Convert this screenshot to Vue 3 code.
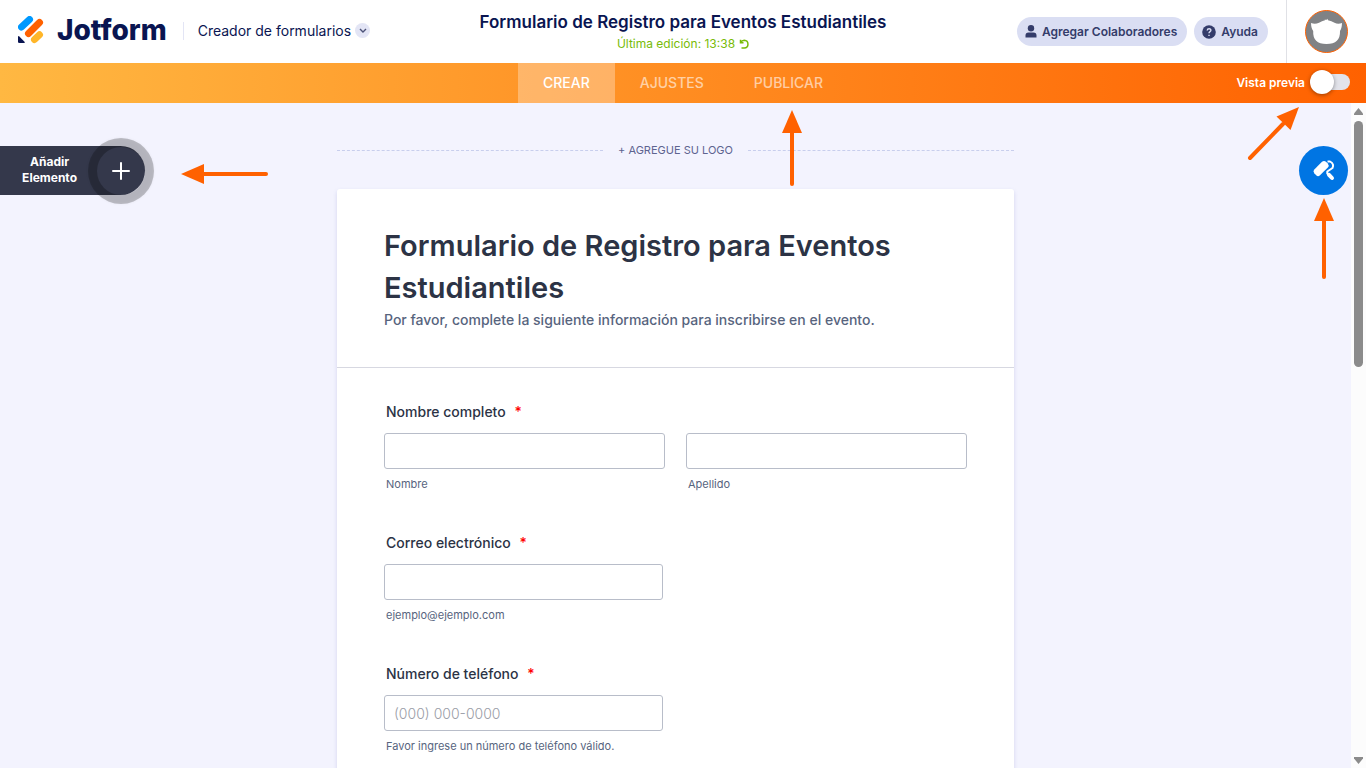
<template>
  <div class="builder">
    <header class="topbar">
      <div class="brand">
        <a class="logo" href="#" aria-label="Jotform">
          <svg class="logo-mark" width="26" height="28" viewBox="0 0 26 28">
            <g fill="none" stroke-width="7" stroke-linecap="round">
              <path d="M3.500 11 L11.500 3.500" stroke="#0099ff" />
              <path d="M10.500 17.500 L21.500 6.500" stroke="#ff6100" />
              <path d="M16.500 23.500 L21.500 18.800" stroke="#ffb629" />
            </g>
            <path d="M0 21 Q0 19.500 1.300 20.500 L6.500 25.800 Q7.500 27 6 27 H1.500 Q0 27 0 26 Z" fill="#0a1551" />
          </svg>
          <span class="logo-name">Jotform</span>
        </a>
        <button class="product" type="button">
          Creador de formularios
          <span class="product-caret">
            <svg width="8" height="5" viewBox="0 0 8 5"><path d="M1 1 L4 4 L7 1" /></svg>
          </span>
        </button>
      </div>

      <div class="heading">
        <h1 class="heading-title">{{ title }}</h1>
        <p class="heading-saved">
          Última edición: 13:38
          <svg width="10" height="10" viewBox="0 0 10 10"><path d="M1.500 0.800 V3.700 H4.500 M1.700 3.500 C2.500 2 3.700 1.300 5.200 1.300 C10.200 1.600 10.200 8.700 5.200 9 H2.500" /></svg>
        </p>
      </div>

      <div class="account">
        <button class="pill" type="button">
          <svg width="12" height="13" viewBox="0 0 12 13">
            <circle cx="6" cy="3.300" r="3.200" />
            <path d="M0.500 12.500 V10.500 Q0.500 7.500 3.500 7.500 H8.500 Q11.500 7.500 11.500 10.500 V12.500 Z" />
          </svg>
          Agregar Colaboradores
        </button>
        <button class="pill" type="button">
          <svg width="14" height="14" viewBox="0 0 14 14">
            <circle cx="7" cy="7" r="6.800" />
            <path d="M5.200 5.500 C5.400 3.200 8.900 3.300 8.900 5.300 C8.900 6.700 7 6.600 7 8.200 M7 9.700 V10.900" fill="none" stroke="#dadef3" stroke-width="1.400" />
          </svg>
          Ayuda
        </button>
        <button class="profile" type="button" aria-label="Mi cuenta">
          <svg width="43" height="43" viewBox="0 0 43 43">
            <circle cx="21.500" cy="21.500" r="21" fill="#808285" stroke="#ff6100" />
            <path d="M6 13 Q10 14.500 14 12.800 Q17 10.800 20 10.300 L19.700 9.500 L21.300 10 L22.300 8.800 L23 10.200 Q26.500 10.800 29.500 12.800 Q33 14.500 37 13 Q36.800 18.500 35 21 Q35.500 34 21.500 34 Q7.500 34 8.200 21 Q6.200 18.500 6 13 Z" fill="#ffffff" />
          </svg>
        </button>
      </div>
    </header>

    <nav class="tabs">
      <div class="tab-list">
        <button
          v-for="tab in tabs"
          :key="tab"
          type="button"
          class="tab"
          :class="{ active: tab === activeTab }"
          @click="activeTab = tab"
        >
          {{ tab }}
        </button>
      </div>
      <label class="preview">
        Vista previa
        <input v-model="preview" type="checkbox" class="switch" />
      </label>
    </nav>

    <div class="body">
      <main class="workspace">
        <div class="side">
          <button class="add-element" type="button">
            <span class="add-text">Añadir<br />Elemento</span>
            <span class="add-circle">
              <svg width="18" height="18" viewBox="0 0 18 18"><path d="M9 1 V17 M1 9 H17" /></svg>
            </span>
          </button>
        </div>

        <div class="stage">
          <button class="add-logo" type="button"><span>+ AGREGUE SU LOGO</span></button>

          <form class="form-card" @submit.prevent>
            <div class="form-head">
              <h2 class="form-title">{{ title }}</h2>
              <p class="form-subtitle">Por favor, complete la siguiente información para inscribirse en el evento.</p>
            </div>
            <div class="questions">
              <fieldset v-for="q in questions" :key="q.label" class="question">
                <legend class="question-label">{{ q.label }} <span class="required">*</span></legend>
                <div class="inputs" :class="{ single: q.inputs.length === 1 }">
                  <div v-for="input in q.inputs" :key="input.id" class="field">
                    <input :id="input.id" :type="input.type" :placeholder="input.placeholder" class="text-input" />
                    <label :for="input.id" class="sublabel">{{ input.sublabel }}</label>
                  </div>
                </div>
              </fieldset>
            </div>
          </form>
        </div>

        <div class="side side-right">
          <button class="designer" type="button" aria-label="Diseñador de formularios">
            <svg width="24" height="24" viewBox="0 0 24 24">
              <path d="M10 2.800 Q12 1 14 2.800 L15.800 4.500 Q17.500 6.500 15.800 8.500 L8 16.300 Q6 18 4.200 16.300 L2.300 14.300 Q0.600 12.300 2.300 10.500 Z" fill="#ffffff" />
              <path d="M15.500 2.500 H18 Q22.500 5 20.500 9 L15.300 12.500 V14.500 L17 16" fill="none" stroke="#ffffff" stroke-width="2" stroke-linejoin="round" />
              <path d="M17 15.800 L20 19" stroke="#ffffff" stroke-width="4" stroke-linecap="round" />
            </svg>
          </button>
        </div>

        <!-- Flechas de la guía -->
        <svg class="arrow arrow-add" width="88" height="22" viewBox="0 0 88 22">
          <path d="M23 11 H85" />
          <polygon points="0,11 23,1 23,21" />
        </svg>
        <svg class="arrow arrow-publish" width="22" height="77" viewBox="0 0 22 77">
          <path d="M11 23 V74" />
          <polygon points="11,0 21,23 1,23" />
        </svg>
        <svg class="arrow arrow-preview" width="54" height="54" viewBox="0 0 54 54">
          <path d="M37 17 L4 51" />
          <polygon points="53,0 44.500,23 30.500,9.500" />
        </svg>
        <svg class="arrow arrow-designer" width="22" height="82" viewBox="0 0 22 82">
          <path d="M11 23 V79" />
          <polygon points="11,0 21,23 1,23" />
        </svg>
      </main>

      <div class="scrollbar" aria-hidden="true">
        <svg width="9" height="7" viewBox="0 0 9 7"><path d="M4.500 0 L9 5.500 V7 H0 V5.500 Z" /></svg>
        <div class="scroll-track"><div class="scroll-thumb"></div></div>
        <svg width="9" height="7" viewBox="0 0 9 7"><path d="M4.500 7 L9 1.500 V0 H0 V1.500 Z" /></svg>
      </div>
    </div>
  </div>
</template>

<script setup>
import { ref } from 'vue';

const title = 'Formulario de Registro para Eventos Estudiantiles';
const tabs = ['CREAR', 'AJUSTES', 'PUBLICAR'];
const activeTab = ref('CREAR');
const preview = ref(false);

const questions = [
  {
    label: 'Nombre completo',
    inputs: [
      { id: 'first-name', type: 'text', sublabel: 'Nombre' },
      { id: 'last-name', type: 'text', sublabel: 'Apellido' }
    ]
  },
  {
    label: 'Correo electrónico',
    inputs: [{ id: 'email', type: 'email', sublabel: 'ejemplo@ejemplo.com' }]
  },
  {
    label: 'Número de teléfono',
    inputs: [
      { id: 'phone', type: 'tel', placeholder: '(000) 000-0000', sublabel: 'Favor ingrese un número de teléfono válido.' }
    ]
  }
];
</script>

<style>
body {
  margin: 0;
}
</style>

<style scoped>
.builder {
  display: flex;
  flex-direction: column;
  height: 100vh;
  overflow: hidden;
  font-family: Inter, "Liberation Sans", sans-serif;
  color: #0a1551;
  background: #f3f3fe;
}

button {
  padding: 0;
  border: 0;
  background: none;
  font-family: inherit;
  color: inherit;
  cursor: pointer;
}

/* Cabecera */
.topbar {
  display: grid;
  grid-template-columns: 1fr auto 1fr;
  flex: none;
  height: 63px;
  background: #ffffff;
}

.brand {
  display: flex;
  align-items: center;
  padding: 0 0 4px 18px;
}

.logo {
  display: flex;
  align-items: center;
  gap: 13px;
  color: #0a1551;
  text-decoration: none;
}

.logo-name {
  font-size: 28px;
  line-height: 32px;
  font-weight: 800;
}

.product {
  display: flex;
  align-items: center;
  gap: 4px;
  height: 18px;
  margin: 2px 0 0 16px;
  padding-left: 14px;
  border-left: 1px solid #e3e5f5;
  font-size: 14px;
  white-space: nowrap;
}

.product-caret {
  display: flex;
  align-items: center;
  justify-content: center;
  width: 15px;
  height: 15px;
  border-radius: 50%;
  background: #e3e5f5;
}

.product-caret path {
  fill: none;
  stroke: #4c5278;
  stroke-width: 1.4;
}

.heading {
  display: flex;
  flex-direction: column;
  align-items: center;
  padding-top: 11px;
}

.heading-title {
  margin: 0;
  font-size: 17px;
  line-height: 22px;
  font-weight: 600;
  white-space: nowrap;
}

.heading-saved {
  display: flex;
  align-items: center;
  gap: 4px;
  margin: 0;
  font-size: 12px;
  line-height: 22px;
  color: #78bb07;
}

.heading-saved path {
  fill: none;
  stroke: #78bb07;
  stroke-width: 1.5;
}

.account {
  display: flex;
  align-items: center;
  justify-content: flex-end;
}

.pill {
  display: flex;
  align-items: center;
  gap: 5px;
  height: 29px;
  margin-right: 7px;
  padding: 0 10px 0 8px;
  border-radius: 15px;
  background: #dadef3;
  color: #343c6a;
  font-size: 12px;
  font-weight: 600;
  white-space: nowrap;
}

.pill svg {
  fill: #343c6a;
}

.profile {
  display: flex;
  align-items: center;
  justify-content: center;
  width: 80px;
  height: 63px;
  margin-left: 11px;
  border-left: 1px solid #e0e1e6;
}

/* Pestañas */
.tabs {
  display: grid;
  grid-template-columns: 1fr auto 1fr;
  flex: none;
  height: 40px;
  background: linear-gradient(90deg, #ffb842 0%, #ff6100 100%);
}

.tab-list {
  display: flex;
  grid-column: 2;
}

.tab {
  padding: 0 25px 2px;
  font-size: 14px;
  font-weight: 500;
  color: rgba(255, 255, 255, 0.6);
}

.tab.active {
  background: rgba(255, 255, 255, 0.3);
  color: #ffffff;
}

.preview {
  display: flex;
  align-items: center;
  justify-content: flex-end;
  gap: 5px;
  padding: 0 16px 2px 0;
  font-size: 12px;
  font-weight: 600;
  color: #ffffff;
}

.switch {
  appearance: none;
  display: flex;
  align-items: center;
  width: 40px;
  height: 16px;
  margin: 0;
  border-radius: 8px;
  background: linear-gradient(90deg, transparent 8px, #e2e3ea 8px);
  cursor: pointer;
}

.switch::before {
  content: "";
  width: 24px;
  height: 24px;
  border-radius: 50%;
  background: #ffffff;
  box-shadow: 0 1px 4px rgba(0, 0, 0, 0.4);
}

.switch:checked {
  justify-content: flex-end;
}

/* Zona de trabajo */
.body {
  display: flex;
  flex: 1;
  min-height: 0;
}

.workspace {
  position: relative;
  display: flex;
  flex: 1;
  min-width: 0;
  overflow: hidden;
}

.side {
  display: flex;
  flex: 1;
  align-items: flex-start;
  padding-top: 43px;
}

.side-right {
  justify-content: flex-end;
}

.add-element {
  display: flex;
  align-items: center;
  justify-content: flex-end;
  gap: 20px;
  width: 145px;
  height: 49px;
  border-radius: 0 25px 25px 0;
  background: #34384b;
  color: #ffffff;
}

.add-text {
  padding-bottom: 2px;
  font-size: 12px;
  line-height: 16px;
  font-weight: 700;
  text-align: center;
}

.add-circle {
  display: flex;
  flex: none;
  align-items: center;
  justify-content: center;
  width: 48px;
  height: 48px;
  border-radius: 50%;
  box-shadow: 0 0 0 9px rgba(0, 0, 0, 0.22), 0 0 3px 9px rgba(0, 0, 0, 0.05);
}

.add-circle path {
  fill: none;
  stroke: #ffffff;
  stroke-width: 2;
  stroke-linecap: round;
}

.stage {
  flex: 0 1 677px;
}

.add-logo {
  display: flex;
  align-items: center;
  gap: 15px;
  width: 100%;
  height: 20px;
  margin: 37px 0 29px;
  font-size: 11px;
  color: #5e6490;
}

.add-logo::before,
.add-logo::after {
  content: "";
  flex: 1;
  border-top: 1px dashed #c8ceed;
}

.form-card {
  border-radius: 3px;
  background: #ffffff;
  box-shadow: 0 2px 4px rgba(84, 95, 180, 0.2);
}

.form-head {
  padding: 36px 47px;
  border-bottom: 1px solid #d7d8e1;
}

.form-title {
  margin: 0;
  font-size: 29px;
  line-height: 42px;
  font-weight: 600;
  color: #2c3345;
}

.form-subtitle {
  margin: 0;
  font-size: 14px;
  line-height: 22px;
  font-weight: 500;
  color: #57647e;
}

.questions {
  display: flex;
  flex-direction: column;
  gap: 40px;
  padding: 34px 47px 40px;
}

.question {
  min-width: 0;
  margin: 0;
  padding: 0;
  border: 0;
}

.question-label {
  margin-bottom: 11px;
  padding: 0 2px;
  font-size: 14px;
  line-height: 20px;
  font-weight: 500;
  color: #2c3345;
}

.required {
  margin-left: 5px;
  color: #ff0000;
}

.inputs {
  display: grid;
  grid-template-columns: 1fr 1fr;
  gap: 21px;
}

.inputs.single {
  gap: 25px;
}

.field {
  display: flex;
  flex-direction: column;
  gap: 7px;
}

.text-input {
  box-sizing: border-box;
  width: 100%;
  height: 36px;
  padding: 0 9px;
  border: 1px solid #b8bdc9;
  border-radius: 3px;
  background: #ffffff;
  font-family: inherit;
  font-size: 14px;
  font-weight: 300;
  color: #2c3345;
}

.text-input::placeholder {
  color: #999ca6;
}

.sublabel {
  padding: 0 2px;
  font-size: 11px;
  line-height: 17px;
  color: #57647e;
}

.designer {
  display: flex;
  align-items: center;
  justify-content: center;
  width: 49px;
  height: 49px;
  margin-right: 3px;
  border-radius: 50%;
  background: #0075e3;
}

/* Flechas */
.arrow {
  position: absolute;
  pointer-events: none;
}

.arrow path {
  fill: none;
  stroke: #ff6100;
  stroke-width: 4;
  stroke-linecap: round;
}

.arrow polygon {
  fill: #ff6100;
}

.arrow-add {
  left: 181px;
  top: 60px;
}

.arrow-publish {
  left: calc(50% + 105px);
  top: 7px;
}

.arrow-preview {
  right: 51px;
  top: 4px;
}

.arrow-designer {
  right: 16px;
  top: 95px;
}

/* Barra de desplazamiento */
.scrollbar {
  display: flex;
  flex: none;
  flex-direction: column;
  align-items: center;
  gap: 6px;
  box-sizing: border-box;
  width: 15px;
  padding: 5px 0 4px;
  background: #fcfcfc;
  fill: #8b8b8b;
}

.scroll-track {
  flex: 1;
  width: 9px;
}

.scroll-thumb {
  height: 39%;
  border-radius: 5px;
  background: #8b8b8b;
}
</style>
